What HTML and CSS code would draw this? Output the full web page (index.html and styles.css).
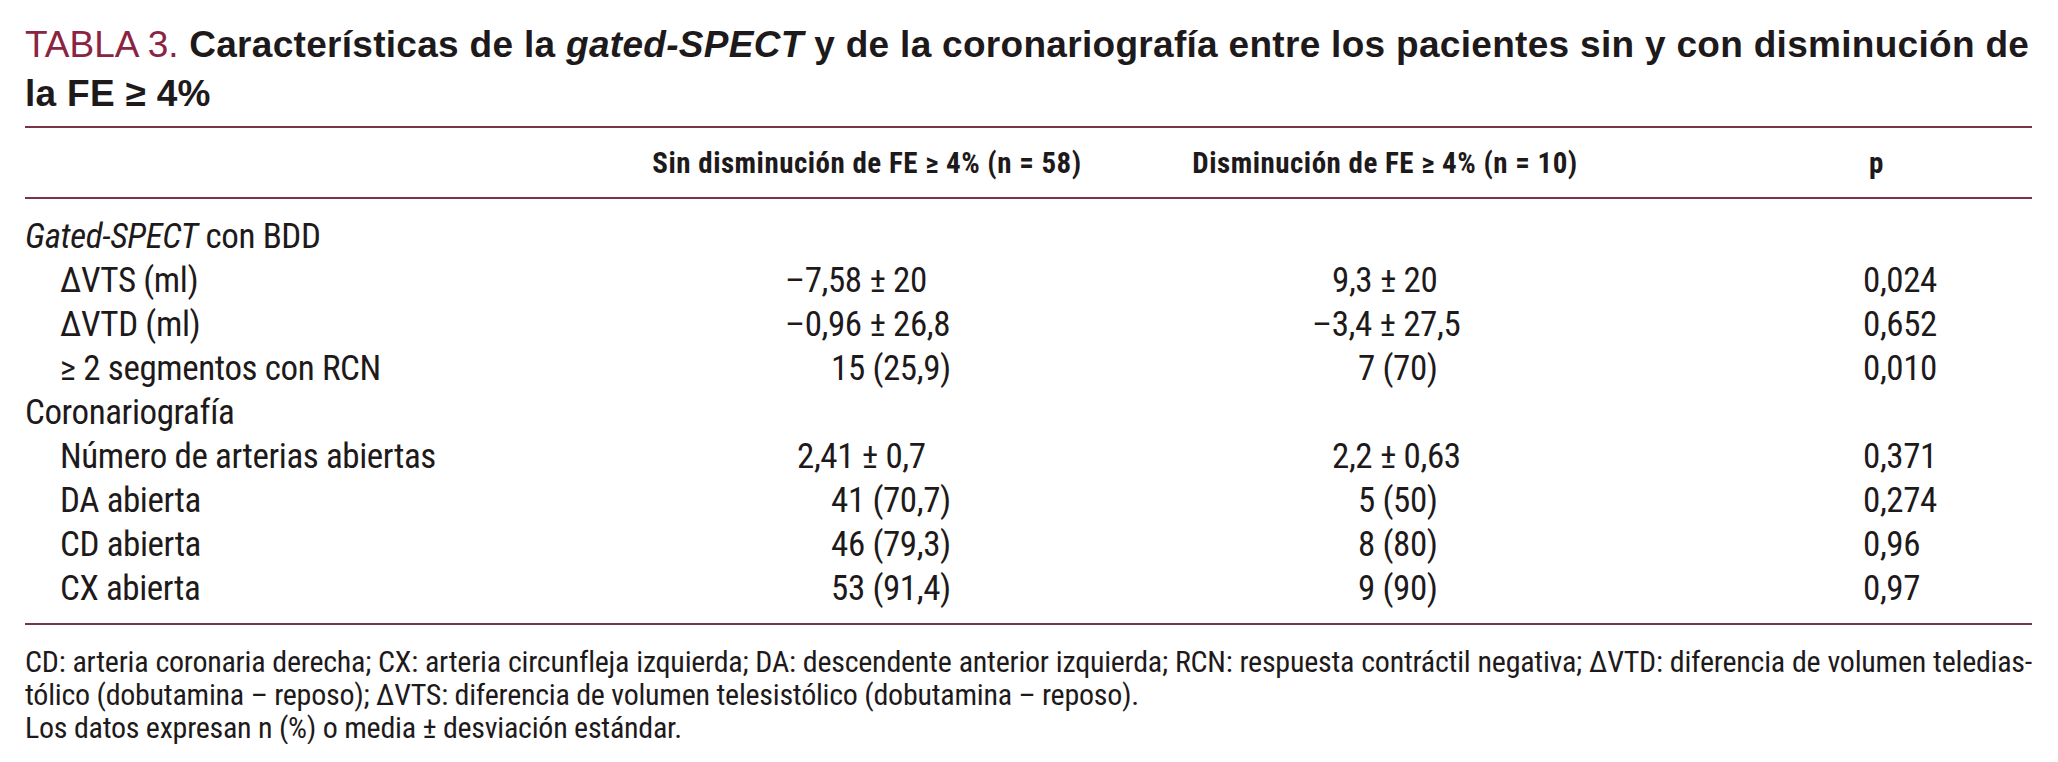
FILE: index.html
```html
<!DOCTYPE html>
<html lang="es">
<head>
<meta charset="utf-8">
<title>Tabla 3</title>
<link rel="stylesheet" href="styles.css">
</head>
<body>
<div class="page">
  <h1 class="title"><span class="tag">TABLA 3.</span> Características de la <i>gated-SPECT</i> y de la coronariografía entre los pacientes sin y con disminución de<br>la FE ≥ 4%</h1>

  <div class="table">
    <div class="grid thead">
      <div></div>
      <div class="hc first">Sin disminución de FE ≥ 4% (n = 58)</div>
      <div class="hc">Disminución de FE ≥ 4% (n = 10)</div>
      <div class="hp">p</div>
    </div>

    <div class="tbody">
      <div class="grid row">
        <div class="lab"><i>Gated-SPECT</i> con BDD</div><div></div><div></div><div></div>
      </div>
      <div class="grid row">
        <div class="lab sub">ΔVTS (ml)</div>
        <div class="v1 a">–7,58 ± 20</div>
        <div class="v2 b">9,3 ± 20</div>
        <div class="vp">0,024</div>
      </div>
      <div class="grid row">
        <div class="lab sub">ΔVTD (ml)</div>
        <div class="v1 a">–0,96 ± 26,8</div>
        <div class="v2 a">–3,4 ± 27,5</div>
        <div class="vp">0,652</div>
      </div>
      <div class="grid row">
        <div class="lab sub">≥ 2 segmentos con RCN</div>
        <div class="v1 c">15 (25,9)</div>
        <div class="v2 c">7 (70)</div>
        <div class="vp">0,010</div>
      </div>
      <div class="grid row">
        <div class="lab">Coronariografía</div><div></div><div></div><div></div>
      </div>
      <div class="grid row">
        <div class="lab sub">Número de arterias abiertas</div>
        <div class="v1 b">2,41 ± 0,7</div>
        <div class="v2 b">2,2 ± 0,63</div>
        <div class="vp">0,371</div>
      </div>
      <div class="grid row">
        <div class="lab sub">DA abierta</div>
        <div class="v1 c">41 (70,7)</div>
        <div class="v2 c">5 (50)</div>
        <div class="vp">0,274</div>
      </div>
      <div class="grid row">
        <div class="lab sub">CD abierta</div>
        <div class="v1 c">46 (79,3)</div>
        <div class="v2 c">8 (80)</div>
        <div class="vp">0,96</div>
      </div>
      <div class="grid row">
        <div class="lab sub">CX abierta</div>
        <div class="v1 c">53 (91,4)</div>
        <div class="v2 c">9 (90)</div>
        <div class="vp">0,97</div>
      </div>
    </div>
  </div>

  <div class="notes">
    <div class="note just">CD: arteria coronaria derecha; CX: arteria circunfleja izquierda; DA: descendente anterior izquierda; RCN: respuesta contráctil negativa; ΔVTD: diferencia de volumen teledias-</div>
    <div class="note">tólico (dobutamina – reposo); ΔVTS: diferencia de volumen telesistólico (dobutamina – reposo).</div>
    <div class="note">Los datos expresan n (%) o media ± desviación estándar.</div>
  </div>
</div>
</body>
</html>
```
FILE: styles.css
```css
html, body {
  margin: 0;
  padding: 0;
  background: #ffffff;
}

.page {
  width: 2007px;
  padding: 20px 0 0 25px;
  color: #1e1a1b;
}

.title {
  margin: 0 0 8px;
  font-family: "Liberation Sans", Arial, sans-serif;
  font-size: 37px;
  line-height: 49px;
  font-weight: bold;
  letter-spacing: 0.3px;
  white-space: nowrap;
  color: #1e1a1b;
}

.title .tag {
  font-weight: normal;
  letter-spacing: 0;
  color: #8b2442;
}

.table {
  border-top: 2px solid #7b3446;
  border-bottom: 2px solid #7b3446;
  font-family: "Roboto Condensed", "Liberation Sans", sans-serif;
}

.grid {
  display: grid;
  grid-template-columns: 600px 500px 520px 1fr;
  align-items: baseline;
}

.thead {
  padding: 19px 0 17px;
  border-bottom: 2px solid #7b3446;
  font-size: 29px;
  line-height: 33px;
  font-weight: bold;
  letter-spacing: 0.5px;
}

.hc {
  text-align: center;
}

.hc.first {
  padding-right: 16px;
}

.hp {
  padding-left: 224px;
}

.tbody {
  padding: 16px 0 12px;
  font-size: 35px;
  line-height: 44px;
  letter-spacing: -0.4px;
}

.row > div {
  white-space: nowrap;
}

.lab.sub {
  padding-left: 35px;
}

.v1.a { padding-left: 160px; }
.v1.b { padding-left: 172px; }
.v1.c { padding-left: 206px; }

.v2.a { padding-left: 187px; }
.v2.b { padding-left: 207px; }
.v2.c { padding-left: 233px; }

.vp {
  padding-left: 218px;
}

.notes {
  padding-top: 20px;
  font-family: "Roboto Condensed", "Liberation Sans", sans-serif;
  font-size: 30px;
  line-height: 33px;
  letter-spacing: -0.25px;
}

.note {
  white-space: nowrap;
}

.note.just {
  white-space: normal;
  text-align: justify;
  text-align-last: justify;
}
```
